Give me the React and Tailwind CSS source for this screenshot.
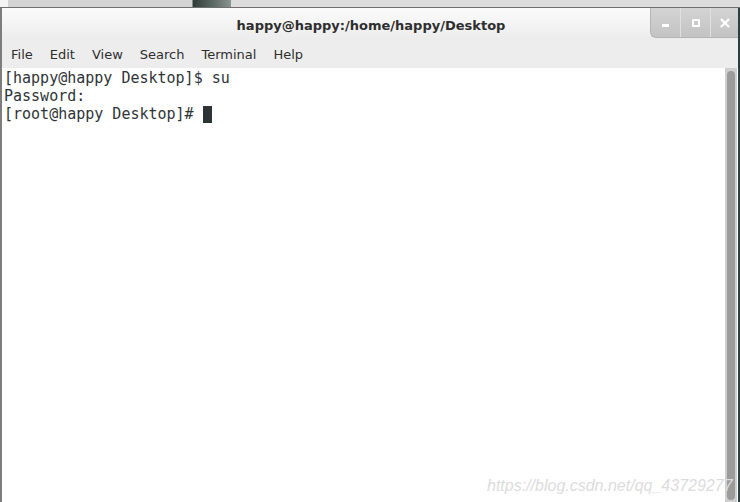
import React from "react";

const menus = ["File", "Edit", "View", "Search", "Terminal", "Help"];

const lines = ["[happy@happy Desktop]$ su", "Password:"];

const App = () => {
  return (
    <div className="w-[740px] h-[502px] overflow-hidden bg-[#d9d9d9] flex flex-col relative">
      {/* strip of the desktop panel behind the window */}
      <div className="h-[8px] flex bg-[#e2e2e2] border-b border-[#6f6f6f]">
        <div className="w-[8px] bg-[#f4f4f4]" />
        <div className="w-[185px] bg-[#d4d4d4] border-r border-[#8a8a8a]" />
        <div className="w-[38px] bg-gradient-to-r from-[#2f3d38] to-[#8a9490]" />
        <div className="flex-1 bg-[#dcdcdc]" />
      </div>

      <div className="flex-1 flex border-l-2 border-[#7d7d7d] border-r-2 border-r-[#27423f]">
        <div className="flex-1 flex flex-col bg-[#ededed]">
          {/* title bar */}
          <div className="h-[32px] flex items-center relative bg-gradient-to-b from-[#fbfbfb] to-[#ececec]">
            <div
              className="flex-1 text-center font-bold text-[13px] text-[#2e2e2e] pl-[2px] pt-[3px]"
              style={{ fontFamily: '"DejaVu Sans", sans-serif' }}
            >
              happy@happy:/home/happy/Desktop
            </div>
            <div className="absolute right-0 top-0 h-[30px] flex rounded-bl-[6px] overflow-hidden border-l border-b border-[#b5b5b5] bg-gradient-to-b from-[#d4d4d4] to-[#c3c3c3]">
              <div className="w-[30px] flex items-end justify-center pb-[10px] border-r border-[#e0e0e0]">
                <div className="w-[7px] h-[3px] bg-white" />
              </div>
              <div className="w-[30px] flex items-center justify-center border-r border-[#e0e0e0]">
                <div className="w-[8px] h-[8px] border-2 border-white" />
              </div>
              <div className="w-[27px] flex items-center justify-center">
                <svg width="10" height="10" viewBox="0 0 10 10">
                  <path d="M1 1 L9 9 M9 1 L1 9" stroke="#ffffff" strokeWidth="2.4" />
                </svg>
              </div>
            </div>
          </div>

          {/* menu bar */}
          <div
            className="h-[28px] flex items-center gap-[17px] pl-[9px] pt-[2px] text-[13px] text-[#2e2e2e]"
            style={{ fontFamily: '"DejaVu Sans", sans-serif' }}
          >
            {menus.map((m) => (
              <span key={m}>{m}</span>
            ))}
          </div>

          {/* terminal */}
          <div className="flex-1 flex bg-white">
            <div
              className="flex-1 pl-[2px] pt-[1px] text-[15px] leading-[18px] text-[#2e3436] whitespace-pre"
              style={{ fontFamily: '"DejaVu Sans Mono", monospace' }}
            >
              {lines.map((l) => (
                <div key={l}>{l}</div>
              ))}
              <div className="flex items-center">
                <span>[root@happy Desktop]# </span>
                <span className="w-[9px] h-[17px] bg-[#2e3436]" />
              </div>
            </div>
            <div className="w-[12px] bg-[#cfcfcf] pt-[3px] pb-[2px] px-[2px] mr-[1px]">
              <div className="h-full rounded-t-[4px] rounded-b-[4px] bg-[#9b9b9b]" />
            </div>
          </div>
        </div>
      </div>

      {/* watermark over the terminal */}
      <div
        className="absolute left-[487px] top-[474px] text-[16px] italic text-[#dcdcdc] whitespace-nowrap"
        style={{ fontFamily: '"Liberation Sans", Arial, sans-serif' }}
      >
        https://blog.csdn.net/qq_43729277
      </div>
    </div>
  );
};

export default App;
